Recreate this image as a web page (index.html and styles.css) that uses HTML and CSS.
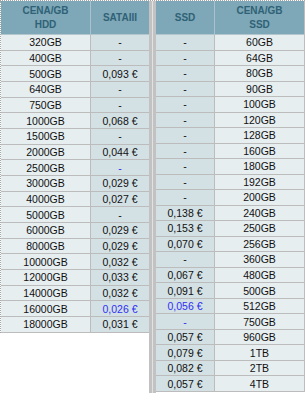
FILE: index.html
```html
<!DOCTYPE html>
<html>
<head>
<meta charset="utf-8">
<link rel="stylesheet" href="styles.css">
</head>
<body>
<div class="page">
  <div class="tbl left">
    <div class="hd c1">CENA/GB<br>HDD</div><div class="hd c2">SATAIII</div>
    <div class="lt c1">320GB</div><div class="dk">-</div>
    <div class="lt c1">400GB</div><div class="dk">-</div>
    <div class="lt c1">500GB</div><div class="dk">0,093 €</div>
    <div class="lt c1">640GB</div><div class="dk">-</div>
    <div class="lt c1">750GB</div><div class="dk">-</div>
    <div class="lt c1">1000GB</div><div class="dk">0,068 €</div>
    <div class="lt c1">1500GB</div><div class="dk">-</div>
    <div class="lt c1">2000GB</div><div class="dk">0,044 €</div>
    <div class="lt c1">2500GB</div><div class="dk blue">-</div>
    <div class="lt c1">3000GB</div><div class="dk">0,029 €</div>
    <div class="lt c1">4000GB</div><div class="dk">0,027 €</div>
    <div class="lt c1">5000GB</div><div class="dk">-</div>
    <div class="lt c1">6000GB</div><div class="dk">0,029 €</div>
    <div class="lt c1">8000GB</div><div class="dk">0,029 €</div>
    <div class="lt c1">10000GB</div><div class="dk">0,032 €</div>
    <div class="lt c1">12000GB</div><div class="dk">0,033 €</div>
    <div class="lt c1">14000GB</div><div class="dk">0,032 €</div>
    <div class="lt c1">16000GB</div><div class="dk blue">0,026 €</div>
    <div class="lt c1">18000GB</div><div class="dk">0,031 €</div>
  </div>
  <div class="sep"></div>
  <div class="tbl right">
    <div class="hd c1">SSD</div><div class="hd c2">CENA/GB<br>SSD</div>
    <div class="dk c1">-</div><div class="lt">60GB</div>
    <div class="dk c1">-</div><div class="lt">64GB</div>
    <div class="dk c1">-</div><div class="lt">80GB</div>
    <div class="dk c1">-</div><div class="lt">90GB</div>
    <div class="dk c1">-</div><div class="lt">100GB</div>
    <div class="dk c1">-</div><div class="lt">120GB</div>
    <div class="dk c1">-</div><div class="lt">128GB</div>
    <div class="dk c1">-</div><div class="lt">160GB</div>
    <div class="dk c1">-</div><div class="lt">180GB</div>
    <div class="dk c1">-</div><div class="lt">192GB</div>
    <div class="dk c1">-</div><div class="lt">200GB</div>
    <div class="dk c1">0,138 €</div><div class="lt">240GB</div>
    <div class="dk c1">0,153 €</div><div class="lt">250GB</div>
    <div class="dk c1">0,070 €</div><div class="lt">256GB</div>
    <div class="dk c1">-</div><div class="lt">360GB</div>
    <div class="dk c1">0,067 €</div><div class="lt">480GB</div>
    <div class="dk c1">0,091 €</div><div class="lt">500GB</div>
    <div class="dk c1 blue">0,056 €</div><div class="lt">512GB</div>
    <div class="dk c1 blue">-</div><div class="lt">750GB</div>
    <div class="dk c1">0,057 €</div><div class="lt">960GB</div>
    <div class="dk c1">0,079 €</div><div class="lt">1TB</div>
    <div class="dk c1">0,082 €</div><div class="lt">2TB</div>
    <div class="dk c1">0,057 €</div><div class="lt">4TB</div>
  </div>
</div>
</body>
</html>
```
FILE: styles.css
```css
html, body {
  margin: 0;
  padding: 0;
  background: #ffffff;
}
body {
  font-family: "Liberation Sans", Arial, sans-serif;
  font-size: 10.5px;
  color: #111111;
}
.page {
  display: flex;
  align-items: flex-start;
  width: 305px;
  height: 393px;
  box-sizing: border-box;
  border-top: 1px dotted #a6a6a6;
}
.tbl {
  display: grid;
}
.left {
  width: 149px;
  box-sizing: border-box;
  border-left: 1px dotted #a6a6a6;
  grid-template-columns: 90px 58px;
  grid-template-rows: 34px;
  grid-auto-rows: 15.68px;
}
.right {
  width: 149px;
  box-sizing: border-box;
  border-right: 1px solid #bdbdbd;
  grid-template-columns: 59px 89px;
  grid-template-rows: 34px;
  grid-auto-rows: 15.52px;
}
.sep {
  width: 7px;
  height: 392px;
  flex: none;
  background: linear-gradient(to right, #c2c2c2 0, #c2c2c2 3px, #e2e2e2 3px, #e2e2e2 4px, #c2c2c2 4px, #c2c2c2 7px);
}
.tbl > div {
  box-sizing: border-box;
  display: flex;
  align-items: center;
  justify-content: center;
  text-align: center;
  border-bottom: 1px solid #bcbcbc;
  white-space: nowrap;
}
.tbl > .c1 {
  border-right: 1px solid #bcbcbc;
}
.tbl > .hd {
  background: #7ea7b7;
  color: #2f6276;
  font-weight: bold;
  font-size: 10px;
  line-height: 14px;
  border-bottom-color: #b3c6cd;
}
.tbl > .hd.c1 {
  border-right-color: #a9c2cb;
}
.lt {
  background: #e6eef0;
}
.dk {
  background: #d3e0e4;
}
.blue {
  color: #2f2ff5;
}
```
